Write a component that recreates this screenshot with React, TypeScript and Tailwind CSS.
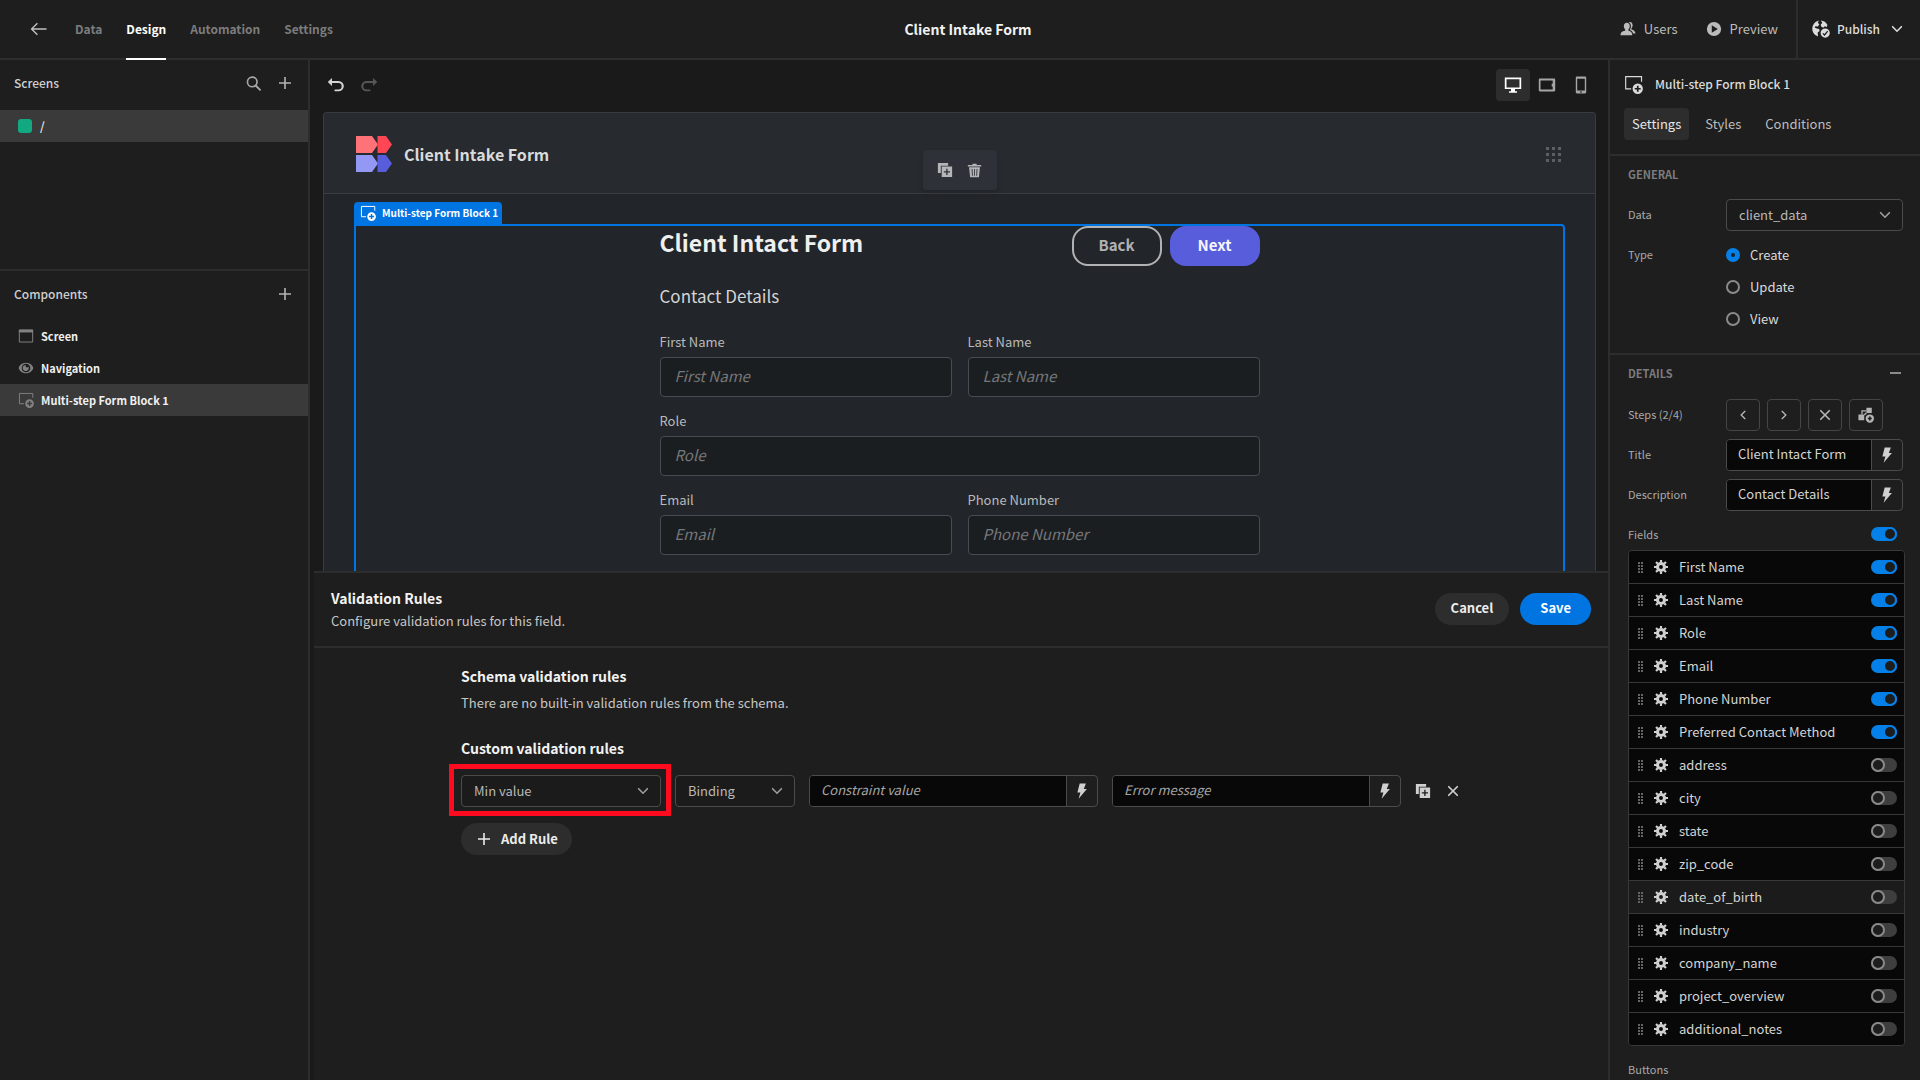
import { useState } from 'react';
import type { ReactNode } from 'react';
import { clsx } from 'clsx';

type IconProps = { className?: string };

function Svg({ className, size = 18, children }: { className?: string; size?: number; children: ReactNode }) {
  return (
    <svg viewBox={`0 0 ${size} ${size}`} className={clsx('shrink-0', className)} fill="currentColor" aria-hidden="true">
      {children}
    </svg>
  );
}

function BackIcon({ className }: IconProps) {
  return (
    <Svg className={className}>
      <path d="M1.7 9H16.5M7.4 3.2 1.6 9l5.8 5.8" fill="none" stroke="currentColor" strokeWidth="1.4" />
    </Svg>
  );
}

function PlusIcon({ className }: IconProps) {
  return (
    <Svg className={className}>
      <path d="M8.2 3h1.6v5.2H15v1.6H9.8V15H8.2V9.8H3V8.2h5.2z" />
    </Svg>
  );
}

function SearchIcon({ className }: IconProps) {
  return (
    <Svg className={className}>
      <circle cx="7.7" cy="7.4" r="5.1" fill="none" stroke="currentColor" strokeWidth="1.7" />
      <path d="m11.3 11.1 4.6 4.6" stroke="currentColor" strokeWidth="2" strokeLinecap="round" />
    </Svg>
  );
}

function ChevronIcon({ className }: IconProps) {
  return (
    <Svg className={className} size={12}>
      <path d="m1.6 3.7 4.4 4.5 4.4-4.5" fill="none" stroke="currentColor" strokeWidth="1.6" strokeLinecap="round" />
    </Svg>
  );
}

function CrossIcon({ className }: IconProps) {
  return (
    <Svg className={className}>
      <path d="m4.2 4.2 9.6 9.6M13.8 4.2l-9.6 9.6" stroke="currentColor" strokeWidth="1.9" strokeLinecap="round" />
    </Svg>
  );
}

function BoltIcon({ className }: IconProps) {
  return (
    <Svg className={className}>
      <path d="M6.4.6h7L11 6.8h3.5L5.2 17.6l2-6.8H3.800z" />
    </Svg>
  );
}

function UndoIcon({ className }: IconProps) {
  return (
    <Svg className={className}>
      <path d="M5 1.9v3h6.6a4.9 4.9 0 0 1 0 10.4H8.3a.9.9 0 0 1 0-1.9h3.1a3.1 3.1 0 0 0 0-6.5H5v3L1 6.2v-.5z" />
    </Svg>
  );
}

function FormBlockIcon({ className }: IconProps) {
  return (
    <Svg className={className}>
      <path d="M6.8 13.2H1.6V1.6h15v4.8" fill="none" stroke="currentColor" strokeWidth="1.1" />
      <path
        fillRule="evenodd"
        d="M13 8.1a4.9 4.9 0 1 1 0 9.8 4.9 4.9 0 0 1 0-9.8zm-.8 2.1v2H10.2v1.6h2v2h1.6v-2h2v-1.6h-2v-2z"
      />
    </Svg>
  );
}

function ScreenIcon({ className }: IconProps) {
  return (
    <Svg className={className}>
      <path d="M1.5 2.2h15v13.6h-15z" fill="none" stroke="currentColor" strokeWidth="1.1" />
      <path d="M1 2h16v3H1z" />
    </Svg>
  );
}

function EyeIcon({ className }: IconProps) {
  return (
    <Svg className={className}>
      <path
        fillRule="evenodd"
        d="M9 3C4.4 3 .9 6.6.9 9s3.5 6 8.1 6 8.1-3.6 8.1-6S13.6 3 9 3zm0 10.9a4.9 4.9 0 1 1 0-9.8 4.9 4.9 0 0 1 0 9.8z"
      />
      <path d="M9 5.5a1.7 1.7 0 0 0 1.2 2.9c.6 0 1.3-.3 1.7-.9A3.5 3.5 0 1 1 9 5.5z" />
    </Svg>
  );
}

function DuplicateIcon({ className }: IconProps) {
  return (
    <Svg className={className}>
      <path d="M1 1h11.5v3.2H4.3v8.3H1z" />
      <path fillRule="evenodd" d="M5.3 5.2H17V17H5.3zm5.1 2.5v2.7H7.7v1.5h2.7v2.7h1.5v-2.7h2.7v-1.5h-2.7V7.7z" />
    </Svg>
  );
}

function TrashIcon({ className }: IconProps) {
  return (
    <Svg className={className}>
      <path
        fillRule="evenodd"
        d="M6.5 1h5v1.5H17v1.8H1V2.5h5.5zM2.5 5.2h13L14.3 17H3.7zm3 2 .5 8h1l-.4-8zm3 0v8h1v-8zm3 0-.4 8h1l.5-8z"
      />
    </Svg>
  );
}

function UsersIcon({ className }: IconProps) {
  return (
    <Svg className={className}>
      <path d="M7.7 2c2 0 3.3 1.4 3.3 3.7 0 1.7-.7 3-1.5 3.9-.3.4-.2 1.2.3 1.4 2.3.8 3.9 1.6 4 4.5v.5H.6v-.5c.1-2.9 1.800-3.700 4.900-4.500.5-.2.6-1 .3-1.400-.8-.9-1.500-2.200-1.500-3.900C4.3 3.4 5.7 2 7.7 2z" />
      <path d="M9.8 1.3c2.500-.6 4.500.7 4.400 3.600 0 1.500-.6 2.700-1.300 3.500-.4.5-.2 1.100.3 1.300 2.500.8 3.900 2 4.200 4.300h-2.700c-.5-2-1.700-3.100-3.700-3.900.8-1.200 1.300-2.700 1.300-4.400 0-1.900-.9-3.500-2.500-4.400z" />
    </Svg>
  );
}

function PlayIcon({ className }: IconProps) {
  return (
    <Svg className={className}>
      <path fillRule="evenodd" d="M9 1a8 8 0 1 1 0 16A8 8 0 0 1 9 1zM6.5 4.8v8.4L13.3 9z" />
    </Svg>
  );
}

function PublishIcon({ className }: IconProps) {
  return (
    <Svg className={className}>
      <path d="M7 .6 5.8 2.600 7.300 4.600 5.900 6.600l-2.600-.4-.6 1.300 2 1.100 2.400.4.500 2-1.900 1.600.3 3.800C2.600 15.500.3 12.400.3 8.600.5 4.600 3.300 1.300 7 .6zM8.900.5c2.900.2 5.300 1.900 6.500 4.400l-.6 2.200-2-.9-1.600 1.600-2.100-1.300-.3-2.100 1.500-1.500z" />
      <path
        fillRule="evenodd"
        d="M13.2 8.5a4.600 4.600 0 1 1 0 9.200 4.600 4.600 0 0 1 0-9.200zm2 2.300-2.700 3.300-1.300-1.200-.8.9 2.200 2.100 3.600-4.300z"
      />
    </Svg>
  );
}

function DesktopIcon({ className }: IconProps) {
  return (
    <Svg className={className}>
      <path fillRule="evenodd" d="M.8 1.5h16.4v11.6H11v2.2h2v1.5H5v-1.5h2v-2.2H.8zm1.700 1.700v8.200h13V3.200z" />
    </Svg>
  );
}

function TabletIcon({ className }: IconProps) {
  return (
    <Svg className={className}>
      <path
        fillRule="evenodd"
        d="M2 2.5h14c.7 0 1.200.5 1.200 1.200v10.600c0 .7-.5 1.200-1.200 1.200H2c-.7 0-1.200-.5-1.200-1.200V3.700c0-.7.5-1.200 1.200-1.200zm.5 2v9h12.200v-3h-1V7.700h1V4.500z"
      />
    </Svg>
  );
}

function PhoneIcon({ className }: IconProps) {
  return (
    <Svg className={className}>
      <path
        fillRule="evenodd"
        d="M5 .5h8c.7 0 1.200.5 1.200 1.200v14.600c0 .7-.5 1.200-1.200 1.200H5c-.7 0-1.200-.5-1.200-1.200V1.700C3.800 1 4.300.5 5 .5zm.2 2.200v11.800h7.600V2.700zM8 15.400v1h2v-1z"
      />
    </Svg>
  );
}

function GearIcon({ className }: IconProps) {
  return (
    <Svg className={className}>
      <circle cx="9" cy="9" r="4.500" fill="none" stroke="currentColor" strokeWidth="4" />
      <path
        d="M9 0v3M9 15v3M0 9h3M15 9h3M2.600 2.600l2.300 2.300M13.100 13.100l2.300 2.300M15.400 2.600l-2.300 2.300M4.900 13.100l-2.300 2.300"
        stroke="currentColor"
        strokeWidth="2.800"
      />
    </Svg>
  );
}

function DragIcon({ className }: IconProps) {
  return (
    <svg viewBox="0 0 5 11" className={className} fill="currentColor" aria-hidden="true">
      {[0, 3, 6, 9].map(y => (
        <path key={y} d={`M0 ${y}h2v2H0zM3 ${y}h2v2H3z`} />
      ))}
    </svg>
  );
}

function AppsIcon({ className }: IconProps) {
  return (
    <svg viewBox="0 0 15 15" className={className} fill="currentColor" aria-hidden="true">
      {[0, 6, 12].map(y => (
        <path key={y} d={`M0 ${y}h3v3H0zM6 ${y}h3v3H6zM12 ${y}h3v3h-3z`} />
      ))}
    </svg>
  );
}

function AddStepIcon({ className }: IconProps) {
  return (
    <Svg className={className}>
      <path d="M.5 8.500h6.500V15H.5zM9.500.8h6v6h-6z" />
      <path d="M4.500 8.500V4.300h5M9.500 6.500 7 9" fill="none" stroke="currentColor" strokeWidth="1.500" />
      <path
        fillRule="evenodd"
        d="M13.300 8.300a4.700 4.700 0 1 1 0 9.400 4.700 4.700 0 0 1 0-9.400zm-.9 2.500v1.300h-1.300v1.800h1.300v1.300h1.800v-1.300h1.300v-1.800h-1.300v-1.300z"
      />
    </Svg>
  );
}

function Logo({ className }: IconProps) {
  return (
    <svg viewBox="0 0 36 36" className={className} aria-hidden="true">
      <path d="M0 0h16l6 8.500-6 8.500H0z" fill="#ff7378" />
      <path d="M21.500 0H30l6 8.500-6 8.500h-8.500z" fill="#ff4654" />
      <path d="M0 19h16l6 8.500-6 8.500H0z" fill="#9398f5" />
      <path d="M21.500 19H30l6 8.500-6 8.500h-8.500z" fill="#585ddc" />
    </svg>
  );
}

function Picker({ label, id, value, className }: { label?: string; id?: string; value: string; className?: string }) {
  return (
    <div className={clsx('relative', className)}>
      <select
        id={id}
        aria-label={label}
        className="block h-8 w-full appearance-none rounded-sm border border-[#4b4b4b] bg-[#1b1b1b] pl-3 pr-8 text-[13px] text-[#b8b8b8]"
      >
        <option>{value}</option>
      </select>
      <ChevronIcon className="pointer-events-none absolute right-3 top-[10px] h-3 w-3 text-[#a0a0a0]" />
    </div>
  );
}

type BindingInputProps = { label?: string; id?: string; value?: string; placeholder?: string };

function BindingInput({ label, id, value, placeholder }: BindingInputProps) {
  return (
    <div className="flex h-8 min-w-0 flex-1 overflow-hidden rounded-sm border border-[#4b4b4b]">
      <input
        id={id}
        aria-label={label}
        defaultValue={value}
        placeholder={placeholder}
        className="w-0 min-w-0 flex-1 bg-[#080808] px-[11px] pb-[3px] text-[13px] text-[#d4d4d4] placeholder:italic placeholder:text-[#a5a5a5]"
      />
      <button type="button" aria-label="Bindings" className="flex w-[31px] items-center justify-center border-l border-[#4b4b4b] text-[#d0d0d0]">
        <BoltIcon className="h-4 w-4" />
      </button>
    </div>
  );
}

function Toggle({ label, checked, onChange }: { label: string; checked: boolean; onChange: () => void }) {
  return (
    <input
      type="checkbox"
      role="switch"
      aria-label={label}
      checked={checked}
      onChange={onChange}
      className="block h-[14px] w-[26px] shrink-0 appearance-none rounded-full bg-[#3e3e3e] before:block before:h-[14px] before:w-[14px] before:rounded-full before:border-2 before:border-[#8a8a8a] before:bg-[#1d1d1d] before:content-[''] checked:bg-[#0480e8] checked:before:translate-x-3 checked:before:border-[#0480e8]"
    />
  );
}

function TopBar() {
  const tabs = ['Data', 'Design', 'Automation', 'Settings'];

  return (
    <header className="grid h-[60px] shrink-0 grid-cols-[1fr_auto_1fr] border-b-2 border-[#2d2d2d] pl-4">
      <nav className="flex items-center gap-6 pl-[14px] text-[12px] font-bold text-[#7c7c7c]">
        <a href="#apps" aria-label="Back" className="mr-[3px] text-[#c0c0c0]">
          <BackIcon className="h-[18px] w-[18px]" />
        </a>
        {tabs.map(tab => (
          <a
            key={tab}
            href={`#${tab.toLowerCase()}`}
            className={clsx('-mb-[2px] flex h-[60px] items-center border-b-2', tab === 'Design' ? 'border-white text-white' : 'border-transparent')}
          >
            {tab}
          </a>
        ))}
      </nav>
      <h1 className="flex items-center text-[14px] font-bold text-[#f2f2f2]">Client Intake Form</h1>
      <div className="flex items-center justify-end text-[13px] text-[#bcbcbc]">
        <button type="button" className="mr-7 flex items-center gap-2">
          <UsersIcon className="h-4 w-4" />
          Users
        </button>
        <button type="button" className="mr-[18px] flex items-center gap-2">
          <PlayIcon className="h-4 w-4" />
          Preview
        </button>
        <button type="button" className="flex h-full items-center border-l-2 border-[#2d2d2d] pl-[14px] pr-[17px] text-[12px] font-medium text-[#dcdcdc]">
          <PublishIcon className="mr-[7px] h-[18px] w-[18px]" />
          Publish
          <ChevronIcon className="ml-[11px] h-3 w-3" />
        </button>
      </div>
    </header>
  );
}

function LeftPanel() {
  return (
    <aside className="flex w-[310px] shrink-0 flex-col border-r-2 border-[#2d2d2d]">
      <section className="h-[211px] border-b-2 border-[#2d2d2d]">
        <div className="flex h-[50px] items-center px-[14px] pb-1">
          <h2 className="flex-1 text-[12px] font-medium text-[#cfcfcf]">Screens</h2>
          <button type="button" aria-label="Search" className="mr-[14px] text-[#a8a8a8]">
            <SearchIcon className="h-[17px] w-[17px]" />
          </button>
          <button type="button" aria-label="Add screen" className="text-[#b4b4b4]">
            <PlusIcon className="h-[18px] w-[18px]" />
          </button>
        </div>
        <a href="#screen" className="flex h-8 items-center gap-2 bg-[#3a3a3a] pl-[18px] text-[12px] font-medium text-[#f0f0f0]">
          <span className="h-[14px] w-[14px] rounded-[3px] bg-[#12a980]" />/
        </a>
      </section>
      <section>
        <div className="flex h-[49px] items-center px-[14px] pb-[3px]">
          <h2 className="flex-1 text-[12px] font-medium text-[#cfcfcf]">Components</h2>
          <button type="button" aria-label="Add component" className="text-[#b4b4b4]">
            <PlusIcon className="h-[18px] w-[18px]" />
          </button>
        </div>
        <ul className="text-[11px] font-bold text-[#f0f0f0]">
          <li className="flex h-8 items-center gap-[7px] pl-[18px]">
            <ScreenIcon className="h-4 w-4 text-[#818181]" />
            Screen
          </li>
          <li className="flex h-8 items-center gap-[7px] pl-[18px]">
            <EyeIcon className="h-4 w-4 text-[#818181]" />
            Navigation
          </li>
          <li className="flex h-8 items-center gap-[7px] bg-[#3a3a3a] pl-[18px]">
            <FormBlockIcon className="h-4 w-4 text-[#818181]" />
            Multi-step Form Block 1
          </li>
        </ul>
      </section>
    </aside>
  );
}

function FormField({ name, wide }: { name: string; wide?: boolean }) {
  return (
    <label className={clsx('block text-[13px] leading-[15px] text-[#b9babb]', wide && 'col-span-2')}>
      {name}
      <input
        placeholder={name}
        className="mt-2 block h-10 w-full rounded border border-[#484c52] bg-[#1b1e21] px-[14px] pb-[3px] text-[15px] placeholder:italic placeholder:text-[#75777a]"
      />
    </label>
  );
}

function Preview() {
  return (
    <div className="flex min-h-0 flex-1 flex-col overflow-hidden pl-[13px] pr-[12px]">
      <div className="mb-[2px] flex h-[50px] shrink-0 items-center">
        <button type="button" aria-label="Undo" className="ml-1 text-[#d4d4d4]">
          <UndoIcon className="h-[18px] w-[18px]" />
        </button>
        <button type="button" aria-label="Redo" className="ml-[15px] text-[#565656]">
          <UndoIcon className="h-[18px] w-[18px] -scale-x-100" />
        </button>
        <div className="-mr-[2px] ml-auto flex">
          <button type="button" aria-label="Desktop" className="flex h-8 w-[34px] items-center justify-center rounded bg-[#2d2d2d] text-white">
            <DesktopIcon className="h-[18px] w-[18px]" />
          </button>
          <button type="button" aria-label="Tablet" className="flex h-8 w-[34px] items-center justify-center text-[#a6a6a6]">
            <TabletIcon className="h-[18px] w-[18px]" />
          </button>
          <button type="button" aria-label="Mobile" className="flex h-8 w-[34px] items-center justify-center text-[#a6a6a6]">
            <PhoneIcon className="h-[18px] w-[18px]" />
          </button>
        </div>
      </div>

      <div className="relative flex-1 rounded-t border border-b-0 border-[#393c3f] bg-[#222529]">
        <div className="flex h-[81px] items-center rounded-t border-b border-[#3a3c40] bg-[#272a2f] pl-8 pr-[34px] pt-[2px]">
          <Logo className="h-9 w-9" />
          <span className="ml-3 flex-1 text-[16px] font-bold text-[#d9dadb]">Client Intake Form</span>
          <AppsIcon className="h-[15px] w-[15px] text-[#5c5f63]" />
        </div>

        {/* toolbar floating over the selected block */}
        <div className="absolute left-1/2 top-[37px] flex h-10 w-[74px] -translate-x-1/2 items-center justify-center gap-[14px] rounded bg-[#2e3138] text-[#b4b5b7] shadow-md">
          <button type="button" aria-label="Duplicate">
            <DuplicateIcon className="h-4 w-4" />
          </button>
          <button type="button" aria-label="Delete">
            <TrashIcon className="h-[15px] w-[15px]" />
          </button>
        </div>

        <div className="mx-[30px] pt-2">
          <div className="flex w-fit items-center gap-[6px] rounded-t bg-[#0074e1] pl-[6px] pr-1 text-[10px] font-bold leading-[22px] text-white">
            <FormBlockIcon className="h-4 w-4" />
            Multi-step Form Block 1
          </div>
          <div className="h-[400px] rounded-tr border-2 border-[#0074e1]">
            <form className="mx-auto max-w-[600px]" onSubmit={e => e.preventDefault()}>
              <div className="flex items-start gap-2">
                <h2 className="flex-1 text-[23px] font-bold leading-8 text-[#efefef]">Client Intact Form</h2>
                <button type="button" className="h-10 w-[90px] rounded-2xl border-2 border-[#b1b2b3] pb-[2px] text-[15px] font-bold text-[#b1b2b3]">
                  Back
                </button>
                <button type="button" className="h-10 w-[90px] rounded-2xl bg-[#585ddc] pb-[2px] text-[15px] font-bold text-[#f4f4fb]">
                  Next
                </button>
              </div>
              <p className="mt-4 text-[17px] leading-7 text-[#d3d4d5]">Contact Details</p>
              <div className="mt-6 grid grid-cols-2 gap-4">
                <FormField name="First Name" />
                <FormField name="Last Name" />
                <FormField name="Role" wide />
                <FormField name="Email" />
                <FormField name="Phone Number" />
              </div>
            </form>
          </div>
        </div>
      </div>
    </div>
  );
}

function ValidationDrawer() {
  return (
    <section className="ml-1 flex h-[509px] shrink-0 flex-col border-t-2 border-[#2d2d2d] bg-[#1e1e1e]">
      <div className="flex h-[75px] shrink-0 items-center gap-[11px] border-b-2 border-[#2d2d2d] px-[17px] pb-[2px]">
        <div className="flex-1">
          <h2 className="text-[14px] font-bold leading-6 text-[#f2f2f2]">Validation Rules</h2>
          <p className="text-[13px] leading-[22px] text-[#c6c6c6]">Configure validation rules for this field.</p>
        </div>
        <button type="button" className="h-8 rounded-full bg-[#2d2d2d] px-4 pb-[2px] text-[13px] font-bold text-[#ececec]">
          Cancel
        </button>
        <button type="button" className="h-8 rounded-full bg-[#0074e1] px-5 pb-[2px] text-[13px] font-bold text-white">
          Save
        </button>
      </div>

      <div className="mx-auto w-full max-w-[1000px] pt-4">
        <h3 className="text-[14px] font-bold leading-6 text-[#f2f2f2]">Schema validation rules</h3>
        <p className="mt-[3px] text-[13px] leading-6 text-[#c6c6c6]">There are no built-in validation rules from the schema.</p>
        <h3 className="mt-[21px] text-[14px] font-bold leading-6 text-[#f2f2f2]">Custom validation rules</h3>
        <div className="mt-[15px] flex items-center gap-[14px]">
          <div className="relative w-[200px]">
            <Picker label="Rule" value="Min value" />
            <div className="pointer-events-none absolute -bottom-[9px] -left-3 -right-[10px] -top-[11px] border-[5px] border-[#ff0a1f]" />
          </div>
          <Picker label="Value type" value="Binding" className="w-[120px]" />
          <BindingInput label="Constraint value" placeholder="Constraint value" />
          <BindingInput label="Error message" placeholder="Error message" />
          <button type="button" aria-label="Duplicate rule" className="text-[#d0d0d0]">
            <DuplicateIcon className="h-4 w-4" />
          </button>
          <button type="button" aria-label="Delete rule" className="text-[#d0d0d0]">
            <CrossIcon className="h-4 w-4" />
          </button>
        </div>
        <button type="button" className="mt-4 flex h-8 items-center gap-2 rounded-full bg-[#2d2d2d] px-[14px] text-[13px] font-bold text-[#ececec]">
          <PlusIcon className="h-[18px] w-[18px]" />
          Add Rule
        </button>
      </div>
    </section>
  );
}

function SettingRow({ label, htmlFor, children }: { label: string; htmlFor?: string; children: ReactNode }) {
  return (
    <div className="flex min-h-8 items-start">
      <label htmlFor={htmlFor} className="w-[98px] shrink-0 text-[11px] leading-[30px] text-[#a9a9a9]">
        {label}
      </label>
      {children}
    </div>
  );
}

const initialFields = [
  { name: 'First Name', active: true },
  { name: 'Last Name', active: true },
  { name: 'Role', active: true },
  { name: 'Email', active: true },
  { name: 'Phone Number', active: true },
  { name: 'Preferred Contact Method', active: true },
  { name: 'address', active: false },
  { name: 'city', active: false },
  { name: 'state', active: false },
  { name: 'zip_code', active: false },
  { name: 'date_of_birth', active: false },
  { name: 'industry', active: false },
  { name: 'company_name', active: false },
  { name: 'project_overview', active: false },
  { name: 'additional_notes', active: false }
];

function SettingsPanel() {
  const [fields, setFields] = useState(initialFields);
  const [allFields, setAllFields] = useState(true);
  const [type, setType] = useState('Create');

  const toggleField = (name: string) => {
    setFields(fields.map(field => (field.name === name ? { ...field, active: !field.active } : field)));
  };

  const stepButton = 'flex h-8 w-[34px] items-center justify-center rounded border border-[#454545] text-[#b4b4b4]';

  return (
    <aside className="w-[312px] shrink-0 overflow-hidden border-l-2 border-[#2d2d2d]">
      <div className="border-b-2 border-[#2d2d2d] pb-[14px] pl-[14px] pt-2">
        <div className="flex h-8 items-center gap-3 text-[#dadada]">
          <FormBlockIcon className="h-[19px] w-[19px]" />
          <h2 className="text-[12px] font-medium">Multi-step Form Block 1</h2>
        </div>
        <div className="mt-2 flex gap-2 text-[13px] text-[#bdbdbd]">
          <button type="button" className="h-8 rounded bg-[#2d2d2d] px-2 text-[#e6e6e6]">
            Settings
          </button>
          <button type="button" className="h-8 px-2">
            Styles
          </button>
          <button type="button" className="h-8 px-2">
            Conditions
          </button>
        </div>
      </div>

      <section className="border-b-2 border-[#2d2d2d] pb-[18px] pl-[18px] pr-[17px] pt-[6px]">
        <h3 className="text-[11px] font-bold leading-6 text-[#7c7c7c]">GENERAL</h3>
        <div className="mt-[13px] flex flex-col gap-2">
          <SettingRow label="Data" htmlFor="data-source">
            <Picker id="data-source" value="client_data" className="flex-1" />
          </SettingRow>
          <SettingRow label="Type">
            <div>
              {['Create', 'Update', 'View'].map(option => (
                <label key={option} className="flex h-8 items-center gap-[10px] text-[13px] text-[#dadada]">
                  <input
                    type="radio"
                    name="type"
                    checked={type === option}
                    onChange={() => setType(option)}
                    className="h-[14px] w-[14px] appearance-none rounded-full border-2 border-[#8a8a8a] checked:border-[5px] checked:border-[#0480e8]"
                  />
                  {option}
                </label>
              ))}
            </div>
          </SettingRow>
        </div>
      </section>

      <section className="pl-[18px] pr-[15px] pt-[6px]">
        <div className="flex items-center justify-between pr-1">
          <h3 className="text-[11px] font-bold leading-6 text-[#7c7c7c]">DETAILS</h3>
          <button type="button" aria-label="Collapse details" className="h-[2px] w-[11px] bg-[#8a8a8a]" />
        </div>
        <div className="mt-[14px] flex flex-col gap-2 pr-[2px]">
          <SettingRow label="Steps (2/4)">
            <div className="flex gap-[7px]">
              <button type="button" aria-label="Previous step" className={stepButton}>
                <ChevronIcon className="h-[10px] w-[10px] rotate-90" />
              </button>
              <button type="button" aria-label="Next step" className={stepButton}>
                <ChevronIcon className="h-[10px] w-[10px] -rotate-90" />
              </button>
              <button type="button" aria-label="Delete step" className={stepButton}>
                <CrossIcon className="h-4 w-4" />
              </button>
              <button type="button" aria-label="Add step" className={stepButton}>
                <AddStepIcon className="h-4 w-4" />
              </button>
            </div>
          </SettingRow>
          <SettingRow label="Title" htmlFor="step-title">
            <BindingInput id="step-title" value="Client Intact Form" />
          </SettingRow>
          <SettingRow label="Description" htmlFor="step-description">
            <BindingInput id="step-description" value="Contact Details" />
          </SettingRow>
        </div>

        <div className="mt-2 flex h-[30px] items-center justify-between pr-2">
          <span className="text-[11px] text-[#a9a9a9]">Fields</span>
          <Toggle label="All fields" checked={allFields} onChange={() => setAllFields(!allFields)} />
        </div>
        <ul className="mt-[1px] divide-y divide-[#383838] overflow-hidden rounded border border-[#383838]">
          {fields.map(field => (
            <li
              key={field.name}
              className={clsx('flex h-[33px] items-center pl-[9px] pr-[7px] last:h-8', field.name === 'date_of_birth' ? 'bg-[#1b1b1b]' : 'bg-[#080808]')}
            >
              <DragIcon className="h-[11px] w-[5px] text-[#646464]" />
              <button type="button" aria-label={`Edit ${field.name}`} className="ml-[11px] text-[#d0d0d0]">
                <GearIcon className="h-[14px] w-[14px]" />
              </button>
              <span className="ml-[11px] flex-1 text-[13px] text-[#d4d4d4]">{field.name}</span>
              <Toggle label={field.name} checked={field.active} onChange={() => toggleField(field.name)} />
            </li>
          ))}
        </ul>
        <p className="mt-2 text-[11px] leading-[30px] text-[#a9a9a9]">Buttons</p>
      </section>
    </aside>
  );
}

export default function App() {
  return (
    <div className="flex h-screen flex-col overflow-hidden bg-[#1e1e1e] font-['Noto_Sans_CJK_JP',sans-serif]">
      <TopBar />
      <div className="flex min-h-0 flex-1">
        <LeftPanel />
        <main className="flex min-w-0 flex-1 flex-col bg-[#1a1a1a]">
          <Preview />
          <ValidationDrawer />
        </main>
        <SettingsPanel />
      </div>
    </div>
  );
}
